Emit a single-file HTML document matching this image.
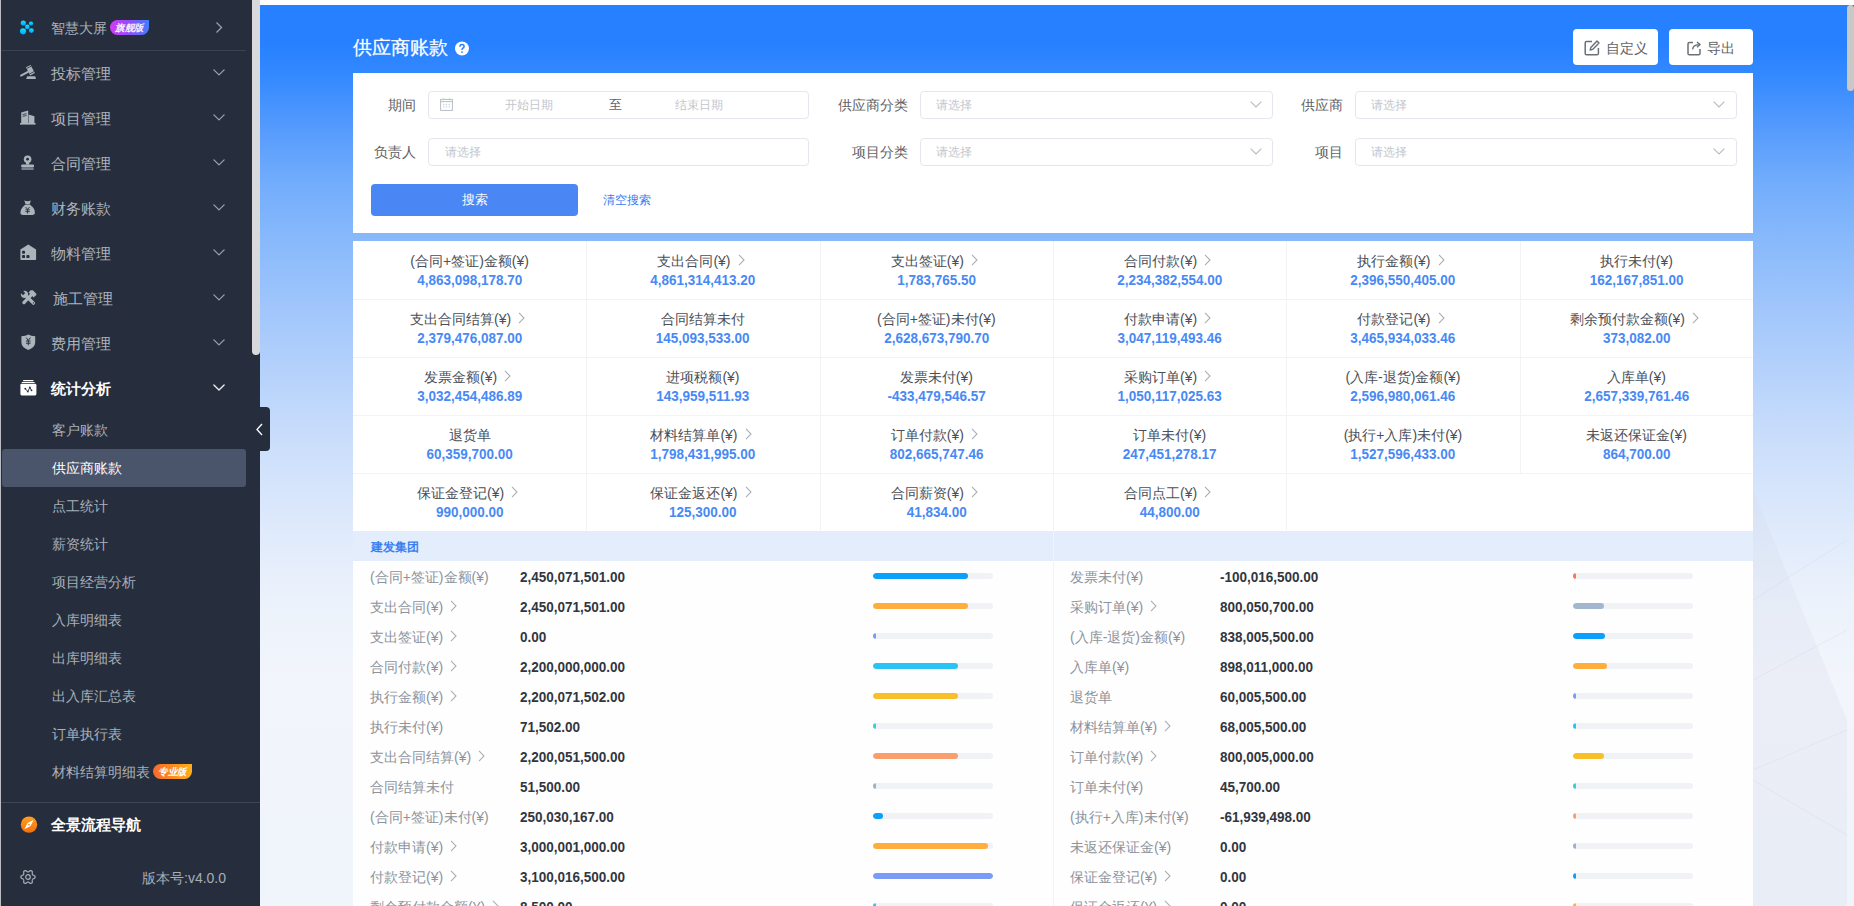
<!DOCTYPE html><html><head><meta charset="utf-8"><style>
*{margin:0;padding:0;box-sizing:border-box}
html,body{width:1854px;height:906px;overflow:hidden}
body{position:relative;font-family:"Liberation Sans",sans-serif;background:#f0f3f8}
.a{position:absolute;white-space:nowrap}
#side{position:absolute;left:0;top:0;width:260px;height:906px;background:#262e3d;overflow:hidden}
.mi{position:absolute;left:51px;font-size:15px;color:#adb4bd;line-height:20px}
.si{position:absolute;left:52px;font-size:14px;color:#a9b0ba;line-height:20px}
.chev{position:absolute;left:213px;width:12px;height:7px}
.ico{position:absolute;left:20px;width:16px;height:16px}
#main{position:absolute;left:260px;top:0;width:1594px;height:906px;
 background:linear-gradient(180deg,#ffffff 0,#ffffff 5px,#2680ff 5px,#2680ff 42px,#3389ff 75px,#569bfd 130px,#71acfc 180px,#88b9fb 240px,#a8cafb 330px,#cadefb 440px,#dde9fb 520px,#ecf2fb 600px,#f2f5fb 680px,#f0f4fb 906px)}
.card{position:absolute;background:#fff}
.lbl{position:absolute;font-size:14px;color:#606266;line-height:20px;text-align:right}
.inp{position:absolute;height:28px;border:1px solid #e4e7ed;border-radius:4px;background:#fff}
.ph{position:absolute;font-size:12px;color:#c3c6cd;line-height:20px}
.cell{position:absolute;width:233px;height:58px;text-align:center}
.cl{position:absolute;left:0;right:0;top:10px;font-size:14px;line-height:20px;color:#4b4f57}
.cv{position:absolute;left:0;right:0;top:29px;font-size:15.5px;line-height:20px;color:#4889f5;font-weight:bold;transform:scaleX(0.87)}
.dl{position:absolute;font-size:14px;line-height:20px;color:#8d939c}
.dv{position:absolute;font-size:15px;line-height:20px;color:#32363e;font-weight:bold;transform:scaleX(0.9);transform-origin:0 0}
.trk{position:absolute;width:120px;height:6px;border-radius:3px;background:#f0f2f6;overflow:hidden}
.fil{position:absolute;left:0;top:0;height:6px;border-radius:3px}
.arr{display:inline-block;width:7px;height:12px;margin-left:7px;margin-right:4px;vertical-align:0}
</style></head><body>
<div id="main"></div>
<div id="side">
<div class="a" style="left:0;top:0;width:1px;height:906px;background:#b9bdc3"></div>
<div class="a" style="left:252px;top:0;width:8px;height:355px;background:#d8d9db;border-radius:0 0 4px 4px"></div>
<svg class="a" style="left:20px;top:20px" width="16" height="16" viewBox="0 0 16 16">
<defs><linearGradient id="gd" x1="0" y1="0" x2="0" y2="1"><stop offset="0" stop-color="#00f0ff"/><stop offset="1" stop-color="#0a9cff"/></linearGradient></defs>
<circle cx="3.3" cy="3" r="2.6" fill="url(#gd)"/><circle cx="11" cy="3.5" r="2.1" fill="url(#gd)"/><circle cx="7.3" cy="6.9" r="2.3" fill="url(#gd)"/><circle cx="3" cy="11.3" r="3.1" fill="url(#gd)"/><circle cx="11.4" cy="10.6" r="2.4" fill="url(#gd)"/></svg>
<div class="a" style="left:51px;top:18px;font-size:14px;line-height:20px;color:#aab1bb">智慧大屏</div>
<div class="a" style="left:110px;top:20px;width:39px;height:15px;border-radius:8px 0 8px 8px;background:linear-gradient(90deg,#d23cf8,#9a48f8 45%,#3f7dff);color:#f4eeff;font-size:9.5px;line-height:15px;font-style:italic;font-weight:bold;text-align:center;letter-spacing:-0.6px">旗舰版</div>
<svg class="a" style="left:215px;top:21px" width="8" height="13" viewBox="0 0 8 13"><path d="M1.5 1.5 L6.5 6.5 L1.5 11.5" fill="none" stroke="#9aa1ab" stroke-width="1.3"/></svg>
<div class="a" style="left:1px;top:50px;width:245px;height:1px;background:#3a4354"></div>
<svg class="a" style="left:20px;top:65px;overflow:visible" width="17" height="16" viewBox="0 0 17 16"><path d="M5.97 2.31 L10.59 -0.09 L14.83 8.09 L10.21 10.49Z" fill="#abb3bb"/><path d="M6.9 3.4 L11.3 1.1 M9.7 8.9 L14 6.6" stroke="#262e3d" stroke-width="0.8"/><path d="M1 10.6 L8 6.8" stroke="#abb3bb" stroke-width="1.9" stroke-linecap="round"/><path d="M7.2 11.2 L15.2 11.2 L16 14 L6.2 14Z" fill="#abb3bb"/></svg>
<div class="mi" style="top:64px;">投标管理</div>
<svg class="a" style="left:213px;top:69px" width="13" height="8" viewBox="0 0 13 8"><path d="M0.9 0.9 L6 5.9 L11.1 0.9" fill="none" stroke="#9aa1ab" stroke-width="1.3" stroke-linecap="round" stroke-linejoin="round"/></svg>
<svg class="a" style="left:20px;top:110px;overflow:visible" width="17" height="16" viewBox="0 0 17 16"><path d="M1.2 2.4 L8.2 0.6 L8.2 13 L1.2 13Z" fill="#abb3bb"/><path d="M8.6 4.5 L14.4 6.2 L14.4 13 L8.6 13Z" fill="#abb3bb"/><rect x="0" y="13" width="15.5" height="1.6" fill="#abb3bb"/><path d="M2.6 4.6 L6.6 3.6 M2.6 6.4 L6.6 5.4" stroke="#262e3d" stroke-width="0.8"/></svg>
<div class="mi" style="top:109px;">项目管理</div>
<svg class="a" style="left:213px;top:114px" width="13" height="8" viewBox="0 0 13 8"><path d="M0.9 0.9 L6 5.9 L11.1 0.9" fill="none" stroke="#9aa1ab" stroke-width="1.3" stroke-linecap="round" stroke-linejoin="round"/></svg>
<svg class="a" style="left:20px;top:155px;overflow:visible" width="17" height="16" viewBox="0 0 17 16"><circle cx="7.6" cy="4.2" r="3.8" fill="#abb3bb"/><circle cx="7.6" cy="4.2" r="1.4" fill="#262e3d"/><rect x="6" y="7" width="3.2" height="2.5" fill="#abb3bb"/><rect x="1.2" y="9.4" width="12.8" height="3" rx="1.2" fill="#abb3bb"/><rect x="1.5" y="13.4" width="12.2" height="1.2" fill="#abb3bb"/></svg>
<div class="mi" style="top:154px;">合同管理</div>
<svg class="a" style="left:213px;top:159px" width="13" height="8" viewBox="0 0 13 8"><path d="M0.9 0.9 L6 5.9 L11.1 0.9" fill="none" stroke="#9aa1ab" stroke-width="1.3" stroke-linecap="round" stroke-linejoin="round"/></svg>
<svg class="a" style="left:20px;top:200px;overflow:visible" width="17" height="16" viewBox="0 0 17 16"><path d="M4.2 0.6 Q7.6 2 11 0.6 L9.6 4 L5.6 4Z" fill="#abb3bb"/><path d="M5.4 4.6 L9.8 4.6 Q15.5 9 14.8 13.2 Q14.4 15 12.5 15 L2.7 15 Q0.8 15 0.5 13.2 Q0 9 5.4 4.6Z" fill="#abb3bb"/><path d="M5.6 7 L7.6 9.4 L9.6 7 M5.4 9.8 H9.8 M5.4 11.6 H9.8 M7.6 9.4 V13.6" stroke="#262e3d" stroke-width="0.9" fill="none"/></svg>
<div class="mi" style="top:199px;">财务账款</div>
<svg class="a" style="left:213px;top:204px" width="13" height="8" viewBox="0 0 13 8"><path d="M0.9 0.9 L6 5.9 L11.1 0.9" fill="none" stroke="#9aa1ab" stroke-width="1.3" stroke-linecap="round" stroke-linejoin="round"/></svg>
<svg class="a" style="left:20px;top:245px;overflow:visible" width="17" height="16" viewBox="0 0 17 16"><path d="M8.3 -0.5 L16.1 4.6 L16.1 14.2 Q16.1 15 15.3 15 L1.2 15 Q0.4 15 0.4 14.2 L0.4 4.6Z" fill="#abb3bb"/><rect x="2.1" y="5.8" width="2.9" height="3" rx="0.7" fill="#262e3d"/><rect x="2.1" y="10.1" width="2.9" height="3" rx="0.7" fill="#262e3d"/><rect x="6.4" y="10.1" width="3.1" height="3" rx="0.9" fill="#262e3d"/></svg>
<div class="mi" style="top:244px;">物料管理</div>
<svg class="a" style="left:213px;top:249px" width="13" height="8" viewBox="0 0 13 8"><path d="M0.9 0.9 L6 5.9 L11.1 0.9" fill="none" stroke="#9aa1ab" stroke-width="1.3" stroke-linecap="round" stroke-linejoin="round"/></svg>
<svg class="a" style="left:20px;top:290px;overflow:visible" width="17" height="16" viewBox="0 0 17 16"><path d="M6.4 6.2 L13.4 13.2" stroke="#abb3bb" stroke-width="3.3" stroke-linecap="round"/><circle cx="4.5" cy="4.3" r="3.6" fill="#abb3bb"/><path d="M0.2 2.4 L2.4 0.2 L5.2 3 L3 5.2Z" fill="#262e3d"/><path d="M10.6 0.3 L12.9 0.3 L16.3 3.7 L16.3 5 L13.6 7.6 L8.6 2.6Z" fill="#abb3bb"/><path d="M10.8 5.4 L3.9 12.6" stroke="#abb3bb" stroke-width="3.3" stroke-linecap="round"/><circle cx="13.4" cy="12.9" r="0.65" fill="#262e3d"/></svg>
<div class="mi" style="top:289px;left:53px">施工管理</div>
<svg class="a" style="left:213px;top:294px" width="13" height="8" viewBox="0 0 13 8"><path d="M0.9 0.9 L6 5.9 L11.1 0.9" fill="none" stroke="#9aa1ab" stroke-width="1.3" stroke-linecap="round" stroke-linejoin="round"/></svg>
<svg class="a" style="left:20px;top:335px;overflow:visible" width="17" height="16" viewBox="0 0 17 16"><path d="M8.3 -0.5 Q11 1.1 15.2 1.3 L15.2 7.6 Q15 12.6 8.3 15.1 Q1.6 12.6 1.4 7.6 L1.4 1.3 Q5.6 1.1 8.3 -0.5Z" fill="#abb3bb"/><path d="M6.2 2.6 L8.3 5.4 L10.4 2.6 M6 6 H10.6 M6 8.2 H10.6 M8.3 5.4 V10.2" stroke="#262e3d" stroke-width="1" fill="none"/></svg>
<div class="mi" style="top:334px;">费用管理</div>
<svg class="a" style="left:213px;top:339px" width="13" height="8" viewBox="0 0 13 8"><path d="M0.9 0.9 L6 5.9 L11.1 0.9" fill="none" stroke="#9aa1ab" stroke-width="1.3" stroke-linecap="round" stroke-linejoin="round"/></svg>
<svg class="a" style="left:20px;top:380px;overflow:visible" width="17" height="16" viewBox="0 0 17 16"><rect x="3" y="0" width="10.6" height="1.2" rx="0.6" fill="#fff"/><rect x="1.6" y="1.9" width="13.2" height="1.2" rx="0.6" fill="#fff"/><rect x="0.4" y="3.8" width="16" height="11.7" rx="1.4" fill="#fff"/><path d="M5.3 8.7 L7.8 11.6 L9.8 7.4 L11.5 10.3" stroke="#262e3d" stroke-width="0.9" fill="none"/><circle cx="5.3" cy="8.7" r="0.9" fill="#262e3d"/><circle cx="7.8" cy="11.6" r="0.9" fill="#262e3d"/><circle cx="9.8" cy="7.4" r="0.9" fill="#262e3d"/><circle cx="11.5" cy="10.3" r="0.9" fill="#262e3d"/></svg>
<div class="mi" style="top:379px;color:#fff;font-weight:bold">统计分析</div>
<svg class="a" style="left:213px;top:384px" width="13" height="8" viewBox="0 0 13 8"><path d="M0.9 0.9 L6 5.9 L11.1 0.9" fill="none" stroke="#e8ebef" stroke-width="1.4" stroke-linecap="round" stroke-linejoin="round"/></svg>
<div class="a" style="left:2px;top:449px;width:244px;height:38px;background:#4a546b;border-radius:3px"></div>
<div class="si" style="top:420px">客户账款</div>
<div class="si" style="top:458px;color:#fff">供应商账款</div>
<div class="si" style="top:496px">点工统计</div>
<div class="si" style="top:534px">薪资统计</div>
<div class="si" style="top:572px">项目经营分析</div>
<div class="si" style="top:610px">入库明细表</div>
<div class="si" style="top:648px">出库明细表</div>
<div class="si" style="top:686px">出入库汇总表</div>
<div class="si" style="top:724px">订单执行表</div>
<div class="si" style="top:762px">材料结算明细表</div>
<div class="a" style="left:153px;top:764px;width:39px;height:15px;border-radius:8px 0 8px 8px;background:linear-gradient(90deg,#f76a2a,#ffae1a);color:#fff;font-size:9.5px;line-height:15px;font-style:italic;font-weight:bold;text-align:center;letter-spacing:-0.6px">专业版</div>
<div class="a" style="left:1px;top:802px;width:259px;height:1px;background:#3d4657"></div>
<svg class="a" style="left:20px;top:816px" width="18" height="18" viewBox="0 0 18 18"><defs><linearGradient id="go" x1="0" y1="0" x2="0" y2="1"><stop offset="0" stop-color="#ffa01e"/><stop offset="1" stop-color="#f86e0c"/></linearGradient></defs><circle cx="9" cy="8.6" r="8.2" fill="url(#go)"/><path d="M13.6 4 L10.5 10.1 L4.4 13.2 L7.5 7.1Z" fill="#fff"/><circle cx="9" cy="8.6" r="0.9" fill="#f88a1a"/></svg>
<div class="a" style="left:51px;top:815px;font-size:15px;line-height:20px;color:#fff;font-weight:bold">全景流程导航</div>
<svg class="a" style="left:20px;top:869px" width="16" height="16" viewBox="0 0 16 16"><path d="M15.05 8.00 L15.04 8.37 L15.01 8.74 L14.71 9.06 L14.33 9.34 L13.89 9.58 L13.45 9.77 L13.04 9.94 L12.70 10.09 L12.59 10.34 L12.46 10.57 L12.32 10.80 L12.17 11.03 L12.20 11.40 L12.26 11.84 L12.31 12.31 L12.33 12.81 L12.28 13.28 L12.14 13.70 L11.84 13.91 L11.53 14.11 L11.20 14.28 L10.87 14.44 L10.44 14.35 L10.00 14.15 L9.58 13.89 L9.19 13.61 L8.85 13.34 L8.54 13.12 L8.27 13.14 L8.00 13.15 L7.73 13.14 L7.46 13.12 L7.15 13.34 L6.81 13.61 L6.42 13.89 L6.00 14.15 L5.56 14.35 L5.13 14.44 L4.80 14.28 L4.48 14.11 L4.16 13.91 L3.86 13.70 L3.72 13.28 L3.67 12.81 L3.69 12.31 L3.74 11.84 L3.80 11.40 L3.83 11.03 L3.68 10.80 L3.54 10.57 L3.41 10.34 L3.30 10.09 L2.96 9.94 L2.55 9.77 L2.11 9.58 L1.67 9.34 L1.29 9.06 L0.99 8.74 L0.96 8.37 L0.95 8.00 L0.96 7.63 L0.99 7.26 L1.29 6.94 L1.67 6.66 L2.11 6.42 L2.55 6.23 L2.96 6.06 L3.30 5.91 L3.41 5.66 L3.54 5.43 L3.68 5.20 L3.83 4.97 L3.80 4.60 L3.74 4.16 L3.69 3.69 L3.67 3.19 L3.72 2.72 L3.86 2.30 L4.16 2.09 L4.47 1.89 L4.80 1.72 L5.13 1.56 L5.56 1.65 L6.00 1.85 L6.42 2.11 L6.81 2.39 L7.15 2.66 L7.46 2.88 L7.73 2.86 L8.00 2.85 L8.27 2.86 L8.54 2.88 L8.85 2.66 L9.19 2.39 L9.58 2.11 L10.00 1.85 L10.44 1.65 L10.87 1.56 L11.20 1.72 L11.53 1.89 L11.84 2.09 L12.14 2.30 L12.28 2.72 L12.33 3.19 L12.31 3.69 L12.26 4.16 L12.20 4.60 L12.17 4.97 L12.32 5.20 L12.46 5.43 L12.59 5.66 L12.70 5.91 L13.04 6.06 L13.45 6.23 L13.89 6.42 L14.33 6.66 L14.71 6.94 L15.01 7.26 L15.04 7.63 L15.05 8.00Z" fill="none" stroke="#a8afb9" stroke-width="1.2" stroke-linejoin="round"/><circle cx="8" cy="8" r="2.3" fill="none" stroke="#a8afb9" stroke-width="1.2"/></svg>
<div class="a" style="left:142px;top:868px;font-size:14px;line-height:20px;color:#a7aeb8">版本号:v4.0.0</div>
</div>
<div class="a" style="left:260px;top:407px;width:10px;height:44px;background:#262e3d;border-radius:0 4px 4px 0"></div>
<svg class="a" style="left:255px;top:423px" width="9" height="13" viewBox="0 0 9 13"><path d="M7 1 L2 6.5 L7 12" fill="none" stroke="#fff" stroke-width="1.3"/></svg>
<svg class="a" style="left:1753px;top:480px" width="94" height="426" viewBox="0 0 94 426"><path d="M0 10 L94 240 L94 426 L0 426Z" fill="rgba(210,216,228,0.22)"/><path d="M0 120 L94 60 M0 200 L94 150 M0 290 L94 250 M0 300 L94 355" stroke="rgba(200,206,218,0.25)" stroke-width="1"/></svg>
<div class="a" style="left:1847px;top:5px;width:7px;height:86px;background:#c9c9c9;border-radius:4px"></div>
<div class="a" style="left:353px;top:35px;font-size:19px;line-height:26px;color:#fff;-webkit-text-stroke:0.25px #fff">供应商账款</div>
<svg class="a" style="left:455px;top:41px" width="14" height="15" viewBox="0 0 14 14"><circle cx="7" cy="7" r="7" fill="#fff"/><path d="M4.9 5.2 Q4.9 3 7 3 Q9.1 3 9.1 4.9 Q9.1 6 7.9 6.7 Q7 7.2 7 8.4" fill="none" stroke="#2680ff" stroke-width="1.5"/><circle cx="7" cy="10.6" r="0.9" fill="#2680ff"/></svg>
<div class="a" style="left:1573px;top:29px;width:85px;height:36px;background:#fff;border-radius:4px"></div>
<svg class="a" style="left:1584px;top:40px" width="16" height="16" viewBox="0 0 16 16"><path d="M8 1.6 H2.6 Q1.2 1.6 1.2 3 V13.4 Q1.2 14.8 2.6 14.8 H13 Q14.4 14.8 14.4 13.4 V8" fill="none" stroke="#6b6f76" stroke-width="1.5"/><path d="M13 1 L15 3 L8.6 9.4 L6.2 10 L6.8 7.6Z" fill="none" stroke="#6b6f76" stroke-width="1.4" stroke-linejoin="round"/></svg>
<div class="a" style="left:1606px;top:38px;font-size:14px;line-height:20px;color:#606266">自定义</div>
<div class="a" style="left:1669px;top:29px;width:84px;height:36px;background:#fff;border-radius:4px"></div>
<svg class="a" style="left:1687px;top:40px" width="15" height="16" viewBox="0 0 15 16"><path d="M6 2.6 H2.4 Q1 2.6 1 4 V13.4 Q1 14.8 2.4 14.8 H11.6 Q13 14.8 13 13.4 V9" fill="none" stroke="#6b6f76" stroke-width="1.5"/><path d="M5.6 9.4 Q6 5 11.6 4.6" fill="none" stroke="#6b6f76" stroke-width="1.4"/><path d="M10 2 L13 4.6 L10 7.2" fill="none" stroke="#6b6f76" stroke-width="1.4"/></svg>
<div class="a" style="left:1707px;top:38px;font-size:14px;line-height:20px;color:#606266">导出</div>
<div class="card" style="left:353px;top:73px;width:1400px;height:160px"></div>
<div class="lbl" style="left:296px;width:120px;top:95px">期间</div>
<div class="lbl" style="left:296px;width:120px;top:142px">负责人</div>
<div class="lbl" style="left:788px;width:120px;top:95px">供应商分类</div>
<div class="lbl" style="left:788px;width:120px;top:142px">项目分类</div>
<div class="lbl" style="left:1223px;width:120px;top:95px">供应商</div>
<div class="lbl" style="left:1223px;width:120px;top:142px">项目</div>
<div class="inp" style="left:428px;top:91px;width:381px"></div>
<div class="inp" style="left:428px;top:138px;width:381px"></div>
<div class="inp" style="left:920px;top:91px;width:353px"></div>
<div class="inp" style="left:920px;top:138px;width:353px"></div>
<div class="inp" style="left:1355px;top:91px;width:382px"></div>
<div class="inp" style="left:1355px;top:138px;width:382px"></div>
<svg class="a" style="left:440px;top:98px" width="13" height="13" viewBox="0 0 13 13"><rect x="0.6" y="1.4" width="11.8" height="11" fill="none" stroke="#b9bec7" stroke-width="1"/><path d="M0.6 3.6 H12.4" stroke="#b9bec7" stroke-width="1"/><path d="M3 6.4 H4.4 M5.8 6.4 H7.2 M8.6 6.4 H10 M3 8.8 H4.4 M5.8 8.8 H7.2 M8.6 8.8 H10" stroke="#c5c9d0" stroke-width="0.9"/><path d="M3.4 0.4 V2.2 M9.6 0.4 V2.2" stroke="#b9bec7" stroke-width="1"/></svg>
<div class="ph" style="left:505px;top:95px">开始日期</div>
<div class="a" style="left:609px;top:95px;font-size:13px;line-height:20px;color:#606266">至</div>
<div class="ph" style="left:675px;top:95px">结束日期</div>
<div class="ph" style="left:445px;top:142px">请选择</div>
<div class="ph" style="left:936px;top:95px">请选择</div>
<div class="ph" style="left:936px;top:142px">请选择</div>
<div class="ph" style="left:1371px;top:95px">请选择</div>
<div class="ph" style="left:1371px;top:142px">请选择</div>
<svg class="a" style="left:1250px;top:101px" width="12" height="7" viewBox="0 0 12 7"><path d="M0.6 0.6 L6 6 L11.4 0.6" fill="none" stroke="#b6bac2" stroke-width="1.1"/></svg>
<svg class="a" style="left:1250px;top:148px" width="12" height="7" viewBox="0 0 12 7"><path d="M0.6 0.6 L6 6 L11.4 0.6" fill="none" stroke="#b6bac2" stroke-width="1.1"/></svg>
<svg class="a" style="left:1713px;top:101px" width="12" height="7" viewBox="0 0 12 7"><path d="M0.6 0.6 L6 6 L11.4 0.6" fill="none" stroke="#b6bac2" stroke-width="1.1"/></svg>
<svg class="a" style="left:1713px;top:148px" width="12" height="7" viewBox="0 0 12 7"><path d="M0.6 0.6 L6 6 L11.4 0.6" fill="none" stroke="#b6bac2" stroke-width="1.1"/></svg>
<div class="a" style="left:371px;top:184px;width:207px;height:32px;background:#4a87f5;border-radius:4px;color:#fff;font-size:12.5px;line-height:32px;text-align:center">搜索</div>
<div class="a" style="left:603px;top:190px;font-size:12px;line-height:20px;color:#3a7cf2">清空搜索</div>
<div class="card" style="left:353px;top:241px;width:1400px;height:290px"></div>
<div class="cell" style="left:353.0px;top:241px;width:233.3px"><div class="cl">(合同+签证)金额(¥)</div><div class="cv">4,863,098,178.70</div></div>
<div class="cell" style="left:586.3px;top:241px;width:233.3px"><div class="cl">支出合同(¥)<svg class="arr" viewBox="0 0 7 12"><path d="M1 0.8 L6 6 L1 11.2" fill="none" stroke="#a9afb8" stroke-width="1.1"/></svg></div><div class="cv">4,861,314,413.20</div></div>
<div class="cell" style="left:819.7px;top:241px;width:233.3px"><div class="cl">支出签证(¥)<svg class="arr" viewBox="0 0 7 12"><path d="M1 0.8 L6 6 L1 11.2" fill="none" stroke="#a9afb8" stroke-width="1.1"/></svg></div><div class="cv">1,783,765.50</div></div>
<div class="cell" style="left:1053.0px;top:241px;width:233.3px"><div class="cl">合同付款(¥)<svg class="arr" viewBox="0 0 7 12"><path d="M1 0.8 L6 6 L1 11.2" fill="none" stroke="#a9afb8" stroke-width="1.1"/></svg></div><div class="cv">2,234,382,554.00</div></div>
<div class="cell" style="left:1286.3px;top:241px;width:233.3px"><div class="cl">执行金额(¥)<svg class="arr" viewBox="0 0 7 12"><path d="M1 0.8 L6 6 L1 11.2" fill="none" stroke="#a9afb8" stroke-width="1.1"/></svg></div><div class="cv">2,396,550,405.00</div></div>
<div class="cell" style="left:1519.7px;top:241px;width:233.3px"><div class="cl">执行未付(¥)</div><div class="cv">162,167,851.00</div></div>
<div class="cell" style="left:353.0px;top:299px;width:233.3px"><div class="cl">支出合同结算(¥)<svg class="arr" viewBox="0 0 7 12"><path d="M1 0.8 L6 6 L1 11.2" fill="none" stroke="#a9afb8" stroke-width="1.1"/></svg></div><div class="cv">2,379,476,087.00</div></div>
<div class="cell" style="left:586.3px;top:299px;width:233.3px"><div class="cl">合同结算未付</div><div class="cv">145,093,533.00</div></div>
<div class="cell" style="left:819.7px;top:299px;width:233.3px"><div class="cl">(合同+签证)未付(¥)</div><div class="cv">2,628,673,790.70</div></div>
<div class="cell" style="left:1053.0px;top:299px;width:233.3px"><div class="cl">付款申请(¥)<svg class="arr" viewBox="0 0 7 12"><path d="M1 0.8 L6 6 L1 11.2" fill="none" stroke="#a9afb8" stroke-width="1.1"/></svg></div><div class="cv">3,047,119,493.46</div></div>
<div class="cell" style="left:1286.3px;top:299px;width:233.3px"><div class="cl">付款登记(¥)<svg class="arr" viewBox="0 0 7 12"><path d="M1 0.8 L6 6 L1 11.2" fill="none" stroke="#a9afb8" stroke-width="1.1"/></svg></div><div class="cv">3,465,934,033.46</div></div>
<div class="cell" style="left:1519.7px;top:299px;width:233.3px"><div class="cl">剩余预付款金额(¥)<svg class="arr" viewBox="0 0 7 12"><path d="M1 0.8 L6 6 L1 11.2" fill="none" stroke="#a9afb8" stroke-width="1.1"/></svg></div><div class="cv">373,082.00</div></div>
<div class="cell" style="left:353.0px;top:357px;width:233.3px"><div class="cl">发票金额(¥)<svg class="arr" viewBox="0 0 7 12"><path d="M1 0.8 L6 6 L1 11.2" fill="none" stroke="#a9afb8" stroke-width="1.1"/></svg></div><div class="cv">3,032,454,486.89</div></div>
<div class="cell" style="left:586.3px;top:357px;width:233.3px"><div class="cl">进项税额(¥)</div><div class="cv">143,959,511.93</div></div>
<div class="cell" style="left:819.7px;top:357px;width:233.3px"><div class="cl">发票未付(¥)</div><div class="cv">-433,479,546.57</div></div>
<div class="cell" style="left:1053.0px;top:357px;width:233.3px"><div class="cl">采购订单(¥)<svg class="arr" viewBox="0 0 7 12"><path d="M1 0.8 L6 6 L1 11.2" fill="none" stroke="#a9afb8" stroke-width="1.1"/></svg></div><div class="cv">1,050,117,025.63</div></div>
<div class="cell" style="left:1286.3px;top:357px;width:233.3px"><div class="cl">(入库-退货)金额(¥)</div><div class="cv">2,596,980,061.46</div></div>
<div class="cell" style="left:1519.7px;top:357px;width:233.3px"><div class="cl">入库单(¥)</div><div class="cv">2,657,339,761.46</div></div>
<div class="cell" style="left:353.0px;top:415px;width:233.3px"><div class="cl">退货单</div><div class="cv">60,359,700.00</div></div>
<div class="cell" style="left:586.3px;top:415px;width:233.3px"><div class="cl">材料结算单(¥)<svg class="arr" viewBox="0 0 7 12"><path d="M1 0.8 L6 6 L1 11.2" fill="none" stroke="#a9afb8" stroke-width="1.1"/></svg></div><div class="cv">1,798,431,995.00</div></div>
<div class="cell" style="left:819.7px;top:415px;width:233.3px"><div class="cl">订单付款(¥)<svg class="arr" viewBox="0 0 7 12"><path d="M1 0.8 L6 6 L1 11.2" fill="none" stroke="#a9afb8" stroke-width="1.1"/></svg></div><div class="cv">802,665,747.46</div></div>
<div class="cell" style="left:1053.0px;top:415px;width:233.3px"><div class="cl">订单未付(¥)</div><div class="cv">247,451,278.17</div></div>
<div class="cell" style="left:1286.3px;top:415px;width:233.3px"><div class="cl">(执行+入库)未付(¥)</div><div class="cv">1,527,596,433.00</div></div>
<div class="cell" style="left:1519.7px;top:415px;width:233.3px"><div class="cl">未返还保证金(¥)</div><div class="cv">864,700.00</div></div>
<div class="cell" style="left:353.0px;top:473px;width:233.3px"><div class="cl">保证金登记(¥)<svg class="arr" viewBox="0 0 7 12"><path d="M1 0.8 L6 6 L1 11.2" fill="none" stroke="#a9afb8" stroke-width="1.1"/></svg></div><div class="cv">990,000.00</div></div>
<div class="cell" style="left:586.3px;top:473px;width:233.3px"><div class="cl">保证金返还(¥)<svg class="arr" viewBox="0 0 7 12"><path d="M1 0.8 L6 6 L1 11.2" fill="none" stroke="#a9afb8" stroke-width="1.1"/></svg></div><div class="cv">125,300.00</div></div>
<div class="cell" style="left:819.7px;top:473px;width:233.3px"><div class="cl">合同薪资(¥)<svg class="arr" viewBox="0 0 7 12"><path d="M1 0.8 L6 6 L1 11.2" fill="none" stroke="#a9afb8" stroke-width="1.1"/></svg></div><div class="cv">41,834.00</div></div>
<div class="cell" style="left:1053.0px;top:473px;width:233.3px"><div class="cl">合同点工(¥)<svg class="arr" viewBox="0 0 7 12"><path d="M1 0.8 L6 6 L1 11.2" fill="none" stroke="#a9afb8" stroke-width="1.1"/></svg></div><div class="cv">44,800.00</div></div>
<div class="a" style="left:353px;top:299px;width:1400px;height:1px;background:#f2f3f5"></div>
<div class="a" style="left:353px;top:357px;width:1400px;height:1px;background:#f2f3f5"></div>
<div class="a" style="left:353px;top:415px;width:1400px;height:1px;background:#f2f3f5"></div>
<div class="a" style="left:353px;top:473px;width:1400px;height:1px;background:#f2f3f5"></div>
<div class="a" style="left:586.3px;top:241px;width:1px;height:290px;background:#f2f3f5"></div>
<div class="a" style="left:819.7px;top:241px;width:1px;height:290px;background:#f2f3f5"></div>
<div class="a" style="left:1053.0px;top:241px;width:1px;height:290px;background:#f2f3f5"></div>
<div class="a" style="left:1286.3px;top:241px;width:1px;height:290px;background:#f2f3f5"></div>
<div class="a" style="left:1519.7px;top:241px;width:1px;height:232px;background:#f2f3f5"></div>
<div class="a" style="left:353px;top:531px;width:1400px;height:30px;background:#e3edfc"></div>
<div class="a" style="left:371px;top:538px;font-size:12px;line-height:18px;color:#3a7ff0;font-weight:bold">建发集团</div>
<div class="card" style="left:353px;top:561px;width:1400px;height:345px;background:#fefefe"></div>
<div class="a" style="left:1053px;top:531px;width:1px;height:375px;background:#f3f4f6"></div>
<div class="dl" style="left:370px;top:567px">(合同+签证)金额(¥)</div>
<div class="dv" style="left:520px;top:567px">2,450,071,501.00</div>
<div class="trk" style="left:873px;top:573px"><div class="fil" style="width:95px;background:#0aa0fb"></div></div>
<div class="dl" style="left:370px;top:597px">支出合同(¥)<svg class="arr" viewBox="0 0 7 12"><path d="M1 0.8 L6 6 L1 11.2" fill="none" stroke="#a9afb8" stroke-width="1.1"/></svg></div>
<div class="dv" style="left:520px;top:597px">2,450,071,501.00</div>
<div class="trk" style="left:873px;top:603px"><div class="fil" style="width:95px;background:#ffae3d"></div></div>
<div class="dl" style="left:370px;top:627px">支出签证(¥)<svg class="arr" viewBox="0 0 7 12"><path d="M1 0.8 L6 6 L1 11.2" fill="none" stroke="#a9afb8" stroke-width="1.1"/></svg></div>
<div class="dv" style="left:520px;top:627px">0.00</div>
<div class="trk" style="left:873px;top:633px"><div class="fil" style="width:3px;background:#7a9cf6"></div></div>
<div class="dl" style="left:370px;top:657px">合同付款(¥)<svg class="arr" viewBox="0 0 7 12"><path d="M1 0.8 L6 6 L1 11.2" fill="none" stroke="#a9afb8" stroke-width="1.1"/></svg></div>
<div class="dv" style="left:520px;top:657px">2,200,000,000.00</div>
<div class="trk" style="left:873px;top:663px"><div class="fil" style="width:85px;background:#2ac3f5"></div></div>
<div class="dl" style="left:370px;top:687px">执行金额(¥)<svg class="arr" viewBox="0 0 7 12"><path d="M1 0.8 L6 6 L1 11.2" fill="none" stroke="#a9afb8" stroke-width="1.1"/></svg></div>
<div class="dv" style="left:520px;top:687px">2,200,071,502.00</div>
<div class="trk" style="left:873px;top:693px"><div class="fil" style="width:85px;background:#f9bf28"></div></div>
<div class="dl" style="left:370px;top:717px">执行未付(¥)</div>
<div class="dv" style="left:520px;top:717px">71,502.00</div>
<div class="trk" style="left:873px;top:723px"><div class="fil" style="width:3px;background:#3bcfd4"></div></div>
<div class="dl" style="left:370px;top:747px">支出合同结算(¥)<svg class="arr" viewBox="0 0 7 12"><path d="M1 0.8 L6 6 L1 11.2" fill="none" stroke="#a9afb8" stroke-width="1.1"/></svg></div>
<div class="dv" style="left:520px;top:747px">2,200,051,500.00</div>
<div class="trk" style="left:873px;top:753px"><div class="fil" style="width:85px;background:#fa9e6b"></div></div>
<div class="dl" style="left:370px;top:777px">合同结算未付</div>
<div class="dv" style="left:520px;top:777px">51,500.00</div>
<div class="trk" style="left:873px;top:783px"><div class="fil" style="width:3px;background:#9fb0c8"></div></div>
<div class="dl" style="left:370px;top:807px">(合同+签证)未付(¥)</div>
<div class="dv" style="left:520px;top:807px">250,030,167.00</div>
<div class="trk" style="left:873px;top:813px"><div class="fil" style="width:10px;background:#0aa0fb"></div></div>
<div class="dl" style="left:370px;top:837px">付款申请(¥)<svg class="arr" viewBox="0 0 7 12"><path d="M1 0.8 L6 6 L1 11.2" fill="none" stroke="#a9afb8" stroke-width="1.1"/></svg></div>
<div class="dv" style="left:520px;top:837px">3,000,001,000.00</div>
<div class="trk" style="left:873px;top:843px"><div class="fil" style="width:115px;background:#ffae3d"></div></div>
<div class="dl" style="left:370px;top:867px">付款登记(¥)<svg class="arr" viewBox="0 0 7 12"><path d="M1 0.8 L6 6 L1 11.2" fill="none" stroke="#a9afb8" stroke-width="1.1"/></svg></div>
<div class="dv" style="left:520px;top:867px">3,100,016,500.00</div>
<div class="trk" style="left:873px;top:873px"><div class="fil" style="width:120px;background:#7a9cf6"></div></div>
<div class="dl" style="left:370px;top:897px">剩余预付款金额(¥)<svg class="arr" viewBox="0 0 7 12"><path d="M1 0.8 L6 6 L1 11.2" fill="none" stroke="#a9afb8" stroke-width="1.1"/></svg></div>
<div class="dv" style="left:520px;top:897px">8,500.00</div>
<div class="trk" style="left:873px;top:903px"><div class="fil" style="width:3px;background:#2ac3f5"></div></div>
<div class="dl" style="left:1070px;top:567px">发票未付(¥)</div>
<div class="dv" style="left:1220px;top:567px">-100,016,500.00</div>
<div class="trk" style="left:1573px;top:573px"><div class="fil" style="width:3px;background:#f6794f"></div></div>
<div class="dl" style="left:1070px;top:597px">采购订单(¥)<svg class="arr" viewBox="0 0 7 12"><path d="M1 0.8 L6 6 L1 11.2" fill="none" stroke="#a9afb8" stroke-width="1.1"/></svg></div>
<div class="dv" style="left:1220px;top:597px">800,050,700.00</div>
<div class="trk" style="left:1573px;top:603px"><div class="fil" style="width:31px;background:#a3b6d0"></div></div>
<div class="dl" style="left:1070px;top:627px">(入库-退货)金额(¥)</div>
<div class="dv" style="left:1220px;top:627px">838,005,500.00</div>
<div class="trk" style="left:1573px;top:633px"><div class="fil" style="width:32px;background:#0aa0fb"></div></div>
<div class="dl" style="left:1070px;top:657px">入库单(¥)</div>
<div class="dv" style="left:1220px;top:657px">898,011,000.00</div>
<div class="trk" style="left:1573px;top:663px"><div class="fil" style="width:34px;background:#ffae3d"></div></div>
<div class="dl" style="left:1070px;top:687px">退货单</div>
<div class="dv" style="left:1220px;top:687px">60,005,500.00</div>
<div class="trk" style="left:1573px;top:693px"><div class="fil" style="width:3px;background:#7a9cf6"></div></div>
<div class="dl" style="left:1070px;top:717px">材料结算单(¥)<svg class="arr" viewBox="0 0 7 12"><path d="M1 0.8 L6 6 L1 11.2" fill="none" stroke="#a9afb8" stroke-width="1.1"/></svg></div>
<div class="dv" style="left:1220px;top:717px">68,005,500.00</div>
<div class="trk" style="left:1573px;top:723px"><div class="fil" style="width:3px;background:#2ac3f5"></div></div>
<div class="dl" style="left:1070px;top:747px">订单付款(¥)<svg class="arr" viewBox="0 0 7 12"><path d="M1 0.8 L6 6 L1 11.2" fill="none" stroke="#a9afb8" stroke-width="1.1"/></svg></div>
<div class="dv" style="left:1220px;top:747px">800,005,000.00</div>
<div class="trk" style="left:1573px;top:753px"><div class="fil" style="width:31px;background:#f9bf28"></div></div>
<div class="dl" style="left:1070px;top:777px">订单未付(¥)</div>
<div class="dv" style="left:1220px;top:777px">45,700.00</div>
<div class="trk" style="left:1573px;top:783px"><div class="fil" style="width:3px;background:#3bcfd4"></div></div>
<div class="dl" style="left:1070px;top:807px">(执行+入库)未付(¥)</div>
<div class="dv" style="left:1220px;top:807px">-61,939,498.00</div>
<div class="trk" style="left:1573px;top:813px"><div class="fil" style="width:3px;background:#fa9e6b"></div></div>
<div class="dl" style="left:1070px;top:837px">未返还保证金(¥)</div>
<div class="dv" style="left:1220px;top:837px">0.00</div>
<div class="trk" style="left:1573px;top:843px"><div class="fil" style="width:3px;background:#9fb0c8"></div></div>
<div class="dl" style="left:1070px;top:867px">保证金登记(¥)<svg class="arr" viewBox="0 0 7 12"><path d="M1 0.8 L6 6 L1 11.2" fill="none" stroke="#a9afb8" stroke-width="1.1"/></svg></div>
<div class="dv" style="left:1220px;top:867px">0.00</div>
<div class="trk" style="left:1573px;top:873px"><div class="fil" style="width:3px;background:#0aa0fb"></div></div>
<div class="dl" style="left:1070px;top:897px">保证金返还(¥)<svg class="arr" viewBox="0 0 7 12"><path d="M1 0.8 L6 6 L1 11.2" fill="none" stroke="#a9afb8" stroke-width="1.1"/></svg></div>
<div class="dv" style="left:1220px;top:897px">0.00</div>
<div class="trk" style="left:1573px;top:903px"><div class="fil" style="width:3px;background:#ffae3d"></div></div>
</body></html>
